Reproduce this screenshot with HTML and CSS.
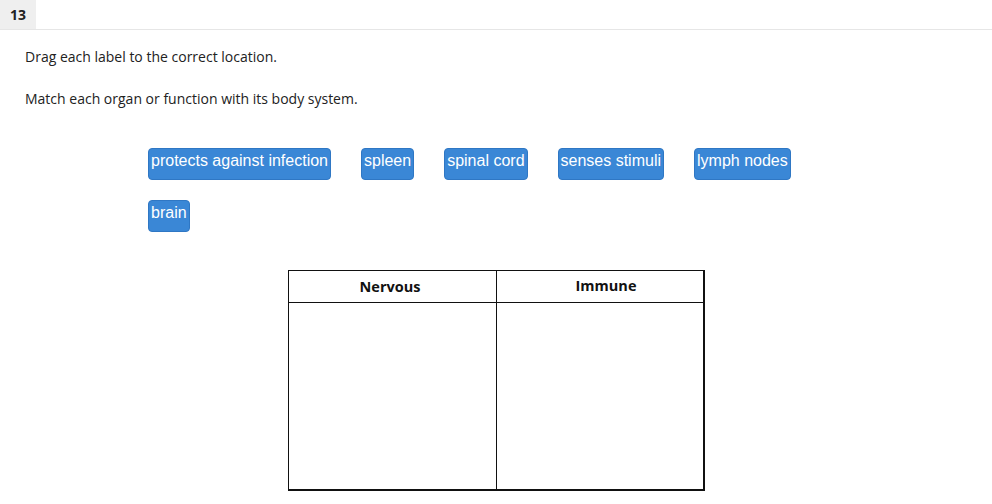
FILE: index.html
```html
<!DOCTYPE html>
<html>
<head>
<meta charset="utf-8">
<link rel="stylesheet" href="styles.css">
</head>
<body>
<div class="topbar">
  <div class="qnum">13</div>
</div>
<div class="content">
  <p class="instr first">Drag each label to the correct location.</p>
  <p class="instr">Match each organ or function with its body system.</p>
  <div class="labels">
    <span class="label">protects against infection</span>
    <span class="label">spleen</span>
    <span class="label">spinal cord</span>
    <span class="label">senses stimuli</span>
    <span class="label">lymph nodes</span>
    <span class="label">brain</span>
  </div>
  <div class="table">
    <div class="th th-left">Nervous</div>
    <div class="th th-right">Immune</div>
    <div class="td"></div>
    <div class="td"></div>
  </div>
</div>
</body>
</html>
```
FILE: styles.css
```css
html, body { margin: 0; padding: 0; background: #fff; }
body { font-family: "Open Sans", "Liberation Sans", sans-serif; color: #222; }
.topbar { height: 29px; border-bottom: 1px solid #e6e6e6; display: flex; }
.qnum { width: 36px; background: #efefef; font-weight: 700; font-size: 14px; display: flex; align-items: center; justify-content: center; color: #222; }
.content { padding: 0 0 0 25px; }
.instr { margin: 0; font-size: 14px; line-height: 20px; }
.instr.first { margin-top: 17px; }
.instr + .instr { margin-top: 22px; }
.labels { display: flex; flex-wrap: wrap; gap: 20px 30px; margin: 39px 0 0 123px; width: 680px; }
.label { background: #3a87d6; color: #fff; font-family: "Liberation Sans", Arial, sans-serif; font-size: 16px; line-height: 20px; height: 32px; box-sizing: border-box; padding: 2px 2px 0 2px; border-radius: 4px; border: 1px solid #2f77c4; }
.table { display: grid; grid-template-columns: 208px 208px; width: 417px; margin: 38px 0 0 263px; border: 1px solid #111; border-bottom-width: 2px; border-right-width: 2px; box-sizing: border-box; }
.th { height: 32px; border-bottom: 1px solid #111; font-family: "Open Sans", sans-serif; font-weight: 700; font-size: 14.5px; display: flex; align-items: center; justify-content: center; color: #111; box-sizing: border-box; }
.th-left { padding: 0 5px 0 0; }
.th-right { padding: 0 0 2px 10px; }
.th:first-child, .td:nth-child(3) { border-right: 1px solid #111; }
.td { height: 186px; }
```
